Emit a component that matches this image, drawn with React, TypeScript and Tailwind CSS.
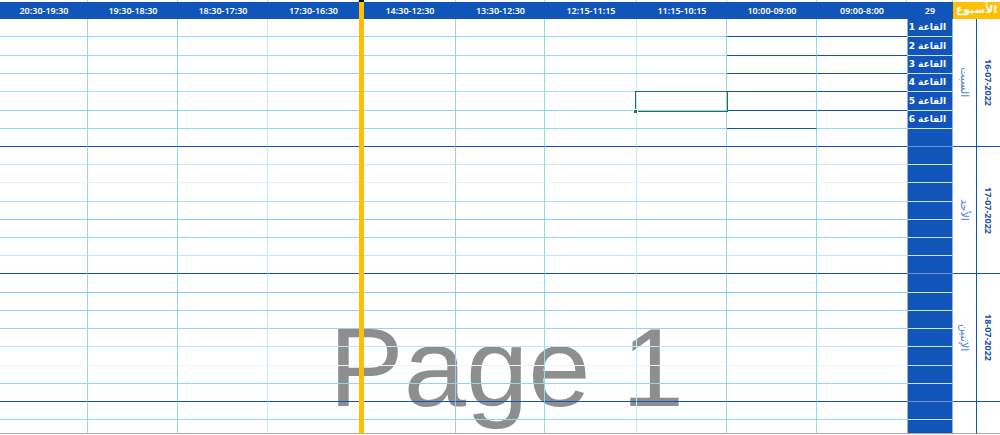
import clsx from "clsx";

const GRID = "grid grid-cols-[88px_90px_90px_91px_5px_92px_89px_92px_90px_90px_90px_46px]";

const HEAD = [
  "20:30-19:30",
  "19:30-18:30",
  "18:30-17:30",
  "17:30-16:30",
  "",
  "14:30-12:30",
  "13:30-12:30",
  "12:15-11:15",
  "11:15-10:15",
  "10:00-09:00",
  "09:00-8:00",
];

// right-edge gridline of each time column (index 4 is the yellow strip)
const COL_R = [
  "border-r border-r-[#8fd8f4]",
  "border-r border-r-[#8fd8f4]",
  "border-r border-r-[#c6ecfa]",
  "",
  "",
  "border-r border-r-[#a5c9df]",
  "border-r border-r-[#8fd8f4]",
  "border-r border-r-[#c6ecfa]",
  "border-r border-r-[#8fd8f4]",
  "border-r border-r-[#8fd8f4]",
  "",
];

const DARK = "border-b-[#1550c0]";

type Row = { h: string; line: string };
type Group = { day: string; date: string; rows: Row[]; rooms?: boolean; last?: boolean };

const groups: Group[] = [
  {
    day: "السبت",
    date: "16-07-2022",
    rooms: true,
    rows: [
      { h: "h-[18px]", line: "border-b-[#8fd8f4]" },
      { h: "h-[19px]", line: "border-b-[#9fdcf5]" },
      { h: "h-[18px]", line: "border-b-[#8fd8f4]" },
      { h: "h-[18px]", line: "border-b-[#a8e0f6]" },
      { h: "h-[19px]", line: "border-b-[#8fd8f4]" },
      { h: "h-[18px]", line: "border-b-[#8fd8f4]" },
      { h: "h-[18px]", line: DARK },
    ],
  },
  {
    day: "الأحد",
    date: "17-07-2022",
    rows: [
      { h: "h-[18px]", line: "border-b-[#c3e8f6]" },
      { h: "h-[18px]", line: "border-b-[#e3f4fb]" },
      { h: "h-[19px]", line: "border-b-[#a8e2f7]" },
      { h: "h-[18px]", line: "border-b-[#7fd2f2]" },
      { h: "h-[18px]", line: "border-b-[#8fd8f4]" },
      { h: "h-[18px]", line: "border-b-[#bfe9f9]" },
      { h: "h-[18px]", line: DARK },
    ],
  },
  {
    day: "الإثنين",
    date: "18-07-2022",
    rows: [
      { h: "h-[19px]", line: "border-b-[#7fcff0]" },
      { h: "h-[18px]", line: "border-b-[#8fd8f4]" },
      { h: "h-[18px]", line: "border-b-[#8fd8f4]" },
      { h: "h-[18px]", line: "border-b-[#bfe6f6]" },
      { h: "h-[19px]", line: "border-b-[#e6f6fc]" },
      { h: "h-[18px]", line: "border-b-[#8fd8f4]" },
      { h: "h-[18px]", line: DARK },
    ],
  },
  {
    day: "",
    date: "",
    last: true,
    rows: [
      { h: "h-[18px]", line: "border-b-[#8fd8f4]" },
      { h: "h-[14px]", line: "border-b-[#a8a8a8]" },
    ],
  },
];

// dark underline on the booked cells of the first day
function cellLine(g: number, r: number, c: number, line: string) {
  if (g === 0 && r < 5 && (c === 9 || c === 10)) return DARK;
  if (g === 0 && r === 5 && c === 9) return DARK;
  return line;
}

function DayGroup({ group, gi }: { group: Group; gi: number }) {
  const end = group.last ? "border-b-[#a8a8a8]" : DARK;
  return (
    <div className="flex">
      <div className="w-[953px]">
        {group.rows.map((row, ri) => {
          const isEnd = ri === group.rows.length - 1;
          return (
            <div key={ri} className={clsx(GRID, row.h)}>
              {HEAD.map((_, ci) =>
                ci === 4 ? (
                  <div key={ci} className="bg-[#ffc000]" />
                ) : (
                  <div key={ci} className={clsx("border-b", cellLine(gi, ri, ci, row.line), COL_R[ci])} />
                )
              )}
              <div
                className={clsx(
                  "flex items-center justify-end pr-[6px] bg-[#1155bb] border-b border-x border-x-[#8fb3ea]",
                  isEnd ? (group.last ? "border-b-[#a8a8a8]" : "border-b-[#6a95dc]") : "border-b-[#d3e1f6]"
                )}
              >
                {group.rooms && ri < 6 && (
                  <span className="whitespace-nowrap text-[9px] font-bold leading-none text-white font-[family-name:DejaVu_Sans,sans-serif]">
                    القاعة {ri + 1}
                  </span>
                )}
              </div>
            </div>
          );
        })}
      </div>
      <div className={clsx("w-[23px] flex items-center justify-center border-b", end)}>
        {group.day && (
          <span className="[writing-mode:vertical-rl] text-[11px] leading-none text-[#4f82d6] font-[family-name:DejaVu_Sans,sans-serif]">
            {group.day}
          </span>
        )}
      </div>
      <div className={clsx("w-[24px] flex items-center justify-center border-b border-l border-l-[#1550c0]", end)}>
        {group.date && (
          <span className="[writing-mode:vertical-rl] text-[9px] font-bold leading-none text-[#1d4ea8] font-[family-name:Noto_Sans,sans-serif]">
            {group.date}
          </span>
        )}
      </div>
    </div>
  );
}

export default function App() {
  return (
    <div className="relative w-[1000px] h-[435px] overflow-hidden bg-white">
      {/* page break preview watermark, sits under the grid */}
      <div className="absolute left-[329px] top-[312px] z-0 text-[112px] leading-none text-[#8e8e8e] font-[family-name:Liberation_Sans,Arial,sans-serif] whitespace-nowrap">
        Page 1
      </div>

      <div className="relative z-10">
        {/* thin strip above the header */}
        <div className="flex h-[2px]">
          <div className={clsx(GRID, "w-[953px]")}>
            {HEAD.map((_, ci) => (
              <div key={ci} className={ci === 4 ? "bg-black" : "border-r border-r-[#d4d4d4]"} />
            ))}
            <div className="border-r border-r-[#d4d4d4]" />
          </div>
        </div>

        {/* header */}
        <div className="flex h-[17px]">
          <div className={clsx(GRID, "w-[953px] bg-[#1155bb]")}>
            {HEAD.map((t, ci) =>
              ci === 4 ? (
                <div key={ci} className="bg-[#ffc000]" />
              ) : (
                <div
                  key={ci}
                  className="flex items-center justify-center text-[9px] font-semibold text-white font-[family-name:Noto_Sans,sans-serif]"
                >
                  {t}
                </div>
              )
            )}
            <div className="flex items-center justify-center text-[9px] font-semibold text-white font-[family-name:Noto_Sans,sans-serif]">
              29
            </div>
          </div>
          <div className="w-[47px] flex items-center justify-center bg-[#ffc000] text-[11px] font-bold text-white font-[family-name:DejaVu_Sans,sans-serif]">
            الأسبوع
          </div>
        </div>

        {groups.map((g, gi) => (
          <DayGroup key={gi} group={g} gi={gi} />
        ))}
      </div>

      {/* active cell selection */}
      <div className="absolute left-[635px] top-[91px] z-20 w-[93px] h-[21px] border-[1.5px] border-[#217346]" />
      <div className="absolute left-[633px] top-[109px] z-20 w-[5px] h-[5px] bg-[#217346] border border-white" />
    </div>
  );
}
